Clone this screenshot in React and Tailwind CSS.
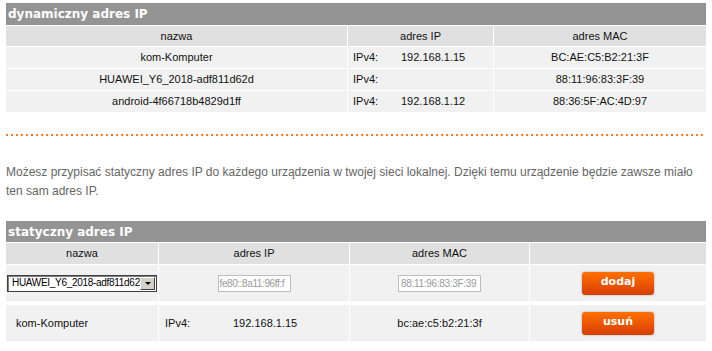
export default function App() {
  const sans = "font-['Liberation_Sans',Arial,sans-serif]";
  const head = "font-['DejaVu_Sans',Verdana,sans-serif]";
  const dyn = [
    { name: "kom-Komputer", ip: "192.168.1.15", mac: "BC:AE:C5:B2:21:3F" },
    { name: "HUAWEI_Y6_2018-adf811d62d", ip: "", mac: "88:11:96:83:3F:39" },
    { name: "android-4f66718b4829d1ff", ip: "192.168.1.12", mac: "88:36:5F:AC:4D:97" },
  ];
  return (
    <div className={`${sans} bg-white w-[712px] h-[351px] overflow-hidden pl-[6px] pt-[3px] text-[11px] text-[#111]`}>
      {/* dynamic table */}
      <div className="w-[700px]">
        <div className={`${head} h-[22px] bg-[#949494] text-white font-bold text-[12px] pl-[2px] flex items-center`}>
          dynamiczny adres IP
        </div>
        <div className="grid grid-cols-[341px_145px_212px] gap-px mt-px">
          <div className="h-[20px] bg-[#e0e0e0] flex items-center justify-center">nazwa</div>
          <div className="h-[20px] bg-[#e0e0e0] flex items-center justify-center">adres IP</div>
          <div className="h-[20px] bg-[#e0e0e0] flex items-center justify-center">adres MAC</div>
          {dyn.map((r) => (
            <div key={r.name} className="contents">
              <div className="h-[21px] bg-[#f1f1f1] flex items-center justify-center">{r.name}</div>
              <div className="h-[21px] bg-[#f1f1f1] flex items-center pl-[5px]">
                <span className="w-[48px]">IPv4:</span>
                <span>{r.ip}</span>
              </div>
              <div className="h-[21px] bg-[#f1f1f1] flex items-center justify-center">{r.mac}</div>
            </div>
          ))}
        </div>
      </div>

      {/* dotted separator */}
      <div className="w-[700px] h-[2px] mt-[22px] bg-[linear-gradient(to_right,#ff7a20_0px,#ff7a20_2px,transparent_2px,transparent_5px)] bg-[length:5px_2px] bg-repeat-x" />

      {/* paragraph */}
      <p className="mt-[27px] w-[700px] text-[12px] leading-[19px] text-[#666]">
        Możesz przypisać statyczny adres IP do każdego urządzenia w twojej sieci lokalnej. Dzięki temu urządzenie będzie zawsze miało
        <br />
        ten sam adres IP.
      </p>

      {/* static table */}
      <div className="w-[700px] mt-[20px]">
        <div className={`${head} h-[21px] bg-[#949494] text-white font-bold text-[12px] pl-[2px] flex items-center`}>
          statyczny adres IP
        </div>
        <div className="grid grid-cols-[152px_190px_179px_176px] gap-x-px mt-px">
          <div className="h-[21px] bg-[#e0e0e0] flex items-center justify-center">nazwa</div>
          <div className="h-[21px] bg-[#e0e0e0] flex items-center justify-center">adres IP</div>
          <div className="h-[21px] bg-[#e0e0e0] flex items-center justify-center">adres MAC</div>
          <div className="h-[21px] bg-[#e0e0e0]" />

          <div className="h-[36px] mt-px bg-[#f1f1f1] flex items-center pl-px">
            <div className="w-[150px] h-[17px] border border-[#404040] shadow-[inset_1px_1px_0_#808080] bg-white flex items-center overflow-hidden">
              <span className="flex-1 overflow-hidden whitespace-nowrap pl-[4px] text-[10px] tracking-[-0.3px] text-black leading-none">
                HUAWEI_Y6_2018-adf811d62
              </span>
              <span className="w-[15px] h-[13px] mr-px bg-[#d4d0c8] border border-t-white border-l-white border-b-[#404040] border-r-[#404040] flex items-center justify-center">
                <span className="w-0 h-0 border-l-[3px] border-r-[3px] border-t-[3px] border-l-transparent border-r-transparent border-t-black" />
              </span>
            </div>
          </div>
          <div className="h-[36px] mt-px bg-[#f1f1f1] flex items-center justify-center">
            <div className="w-[73px] h-[17px] border border-[#bdbdbd] bg-white overflow-hidden whitespace-nowrap text-[10px] tracking-[-0.4px] text-[#9a9a9a] pl-px flex items-center">
              fe80::8a11:96ff:f
            </div>
          </div>
          <div className="h-[36px] mt-px bg-[#f1f1f1] flex items-center justify-center">
            <div className="w-[83px] h-[17px] border border-[#bdbdbd] bg-white overflow-hidden whitespace-nowrap text-[10px] tracking-[-0.3px] text-[#9a9a9a] pl-[2px] flex items-center">
              88:11:96:83:3F:39
            </div>
          </div>
          <div className="h-[36px] mt-px bg-[#f1f1f1] flex items-center justify-center">
            <button className={`${head} w-[74px] h-[25px] rounded-[4px] border border-[#d8d8d8] bg-linear-to-b from-[#ff7000] to-[#d63c00] text-white font-bold text-[11px] shadow-[0_0_0_1px_#ececec] pb-[2px]`}>
              dodaj
            </button>
          </div>

          <div className="h-[36px] mt-[4px] bg-[#f1f1f1] flex items-center pl-[10px]">kom-Komputer</div>
          <div className="h-[36px] mt-[4px] bg-[#f1f1f1] flex items-center pl-[6px]">
            <span className="w-[68px]">IPv4:</span>
            <span>192.168.1.15</span>
          </div>
          <div className="h-[36px] mt-[4px] bg-[#f1f1f1] flex items-center justify-center">bc:ae:c5:b2:21:3f</div>
          <div className="h-[36px] mt-[4px] bg-[#f1f1f1] flex items-center justify-center">
            <button className={`${head} w-[74px] h-[25px] rounded-[4px] border border-[#d8d8d8] bg-linear-to-b from-[#ff7000] to-[#d63c00] text-white font-bold text-[11px] shadow-[0_0_0_1px_#ececec] pb-[2px]`}>
              usuń
            </button>
          </div>
        </div>
      </div>
    </div>
  );
}
